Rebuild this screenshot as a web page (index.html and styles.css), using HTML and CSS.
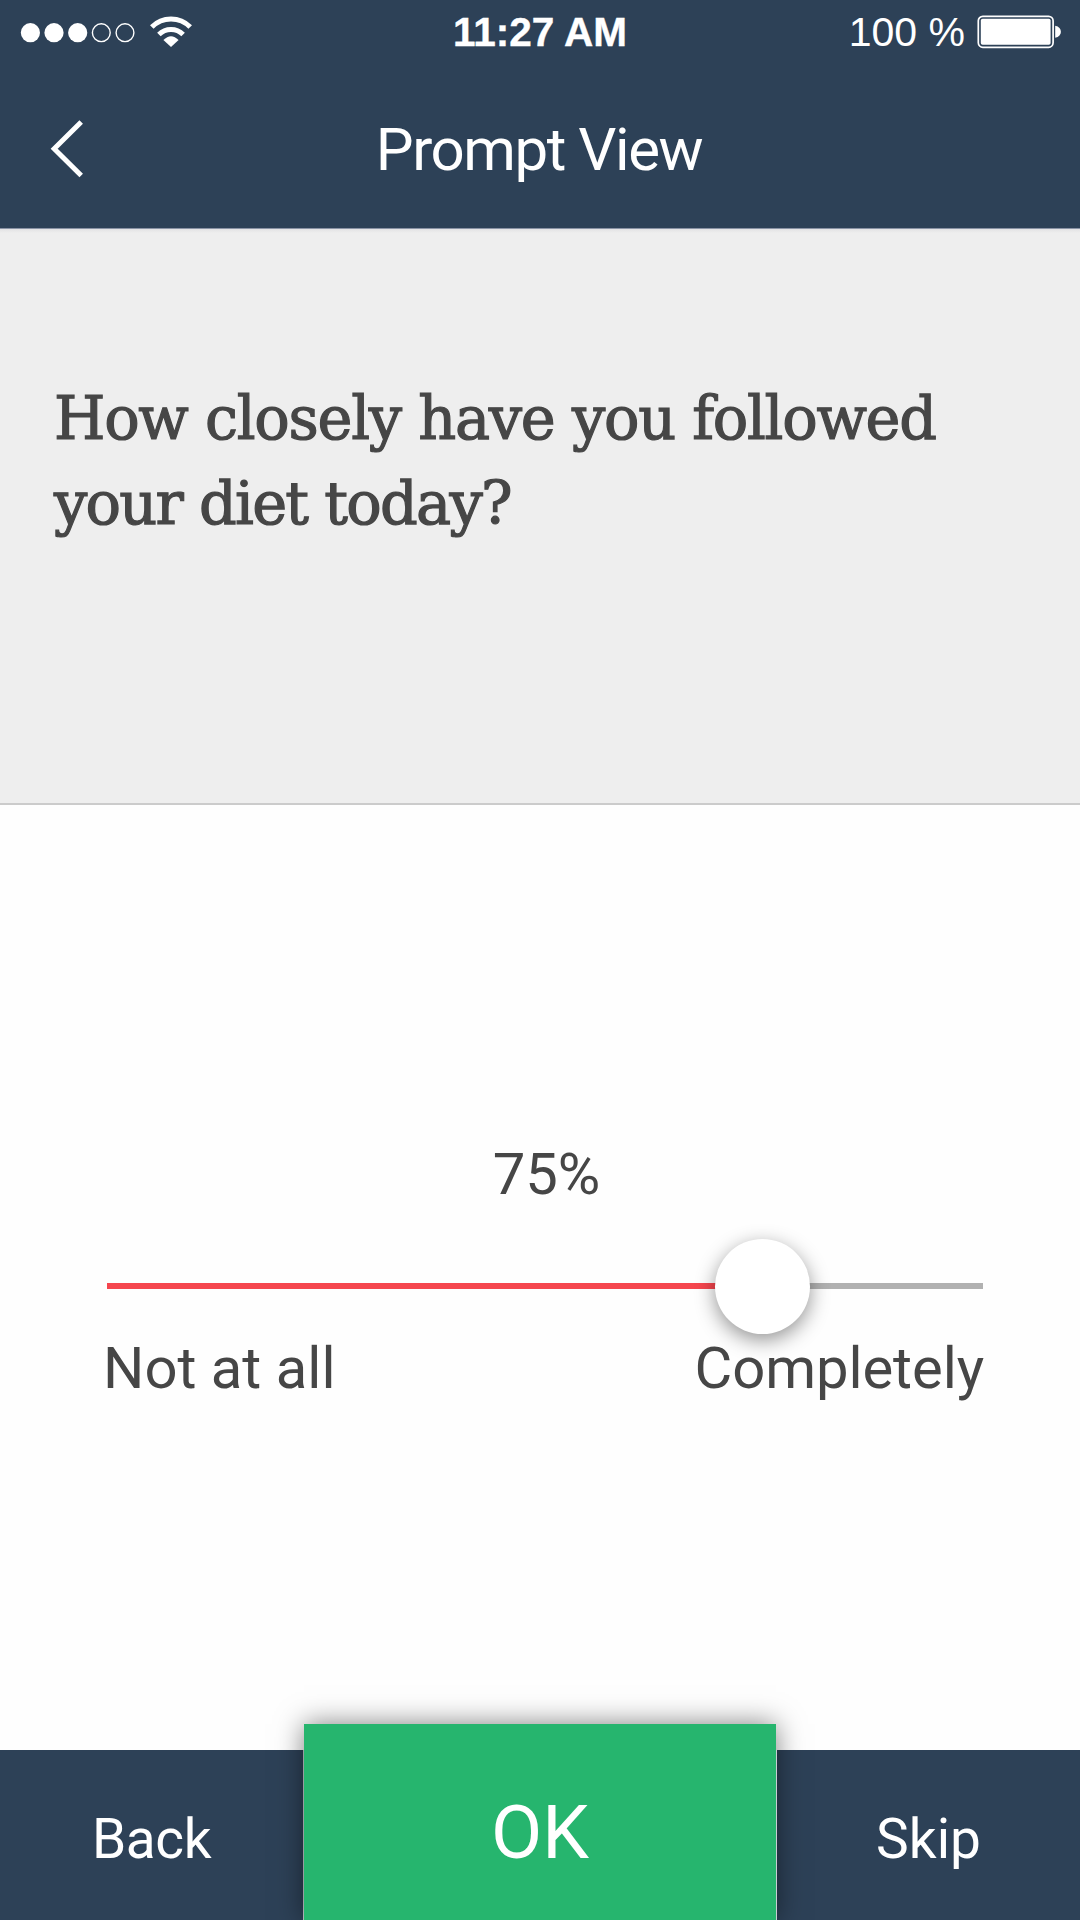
FILE: index.html
```
<!DOCTYPE html>
<html lang="en">
<head>
<meta charset="utf-8">
<title>Prompt View</title>
<link rel="stylesheet" href="styles.css">
</head>
<body>
<div class="screen">
  <header class="header">
    <div class="status">
      <svg class="signal" width="193" height="64" viewBox="0 0 193 64" aria-hidden="true">
        <g fill="#fff">
          <circle cx="30.4" cy="31.7" r="9.6"/>
          <circle cx="54" cy="31.7" r="9.6"/>
          <circle cx="77.7" cy="31.7" r="9.6"/>
          <path d="M171 46.1 163.4 39.1Q171 31.5 178.6 39.1Z"/>
        </g>
        <g fill="none" stroke="#fff">
          <circle cx="101.3" cy="31.7" r="8.9" stroke-width="1.4"/>
          <circle cx="125" cy="31.7" r="8.9" stroke-width="1.4"/>
          <path d="M151.8 25.9A27 27 0 0 1 190.2 25.9" stroke-width="5"/>
          <path d="M158.9 33.5A17.1 17.1 0 0 1 183.1 33.5" stroke-width="5"/>
        </g>
      </svg>
      <span class="time">11:27 AM</span>
      <div class="power">
        <span class="percent">100 %</span>
        <svg class="battery" width="86" height="34" viewBox="0 0 86 34" aria-hidden="true">
          <rect x="1.3" y="1.3" width="74.8" height="31" rx="4.5" fill="none" stroke="#fff" stroke-width="1.7"/>
          <rect x="3.8" y="3.8" width="69.8" height="26" rx="1.8" fill="#fff"/>
          <path d="M78.2 10.8C85.8 11.8 85.8 21.8 78.2 22.8Z" fill="#fff"/>
        </svg>
      </div>
    </div>
    <div class="nav">
      <svg class="chevron" width="34" height="60" viewBox="0 0 34 60" aria-label="Back">
        <path d="M31.2 3 4.2 29.8 31.2 56.6" fill="none" stroke="#fff" stroke-width="5"/>
      </svg>
      <h1 class="title">Prompt View</h1>
    </div>
  </header>
  <section class="question">
    <p class="prompt"><span class="line">How closely have you followed</span> <span class="line line-last">your diet today?</span></p>
  </section>
  <main class="answer">
    <div class="value">75%</div>
    <div class="slider">
      <div class="fill" style="width:75%"></div>
      <div class="thumb" style="left:75%"></div>
    </div>
    <div class="labels"><span>Not at all</span><span class="max">Completely</span></div>
  </main>
  <footer class="actions">
    <div class="action back">Back</div>
    <div class="action ok">OK</div>
    <div class="action skip">Skip</div>
  </footer>
</div>
</body>
</html>
```
FILE: styles.css
```
* { box-sizing: border-box; }
body { margin: 0; }
.screen {
  width: 1080px;
  height: 1920px;
  display: flex;
  flex-direction: column;
  overflow: hidden;
  background: #fefefe;
  color: #464646;
  font-family: Roboto, "Liberation Sans", sans-serif;
}
.header {
  height: 229px;
  background: #2d4157;
  border-bottom: 1px solid #8a93a5;
  color: #fff;
}
.status {
  height: 65px;
  display: grid;
  grid-template-columns: 1fr auto 1fr;
  align-items: center;
  font-family: "Liberation Sans", sans-serif;
  line-height: 65px;
}
.signal { display: block; }
.time { font-size: 40.5px; font-weight: bold; -webkit-text-stroke: .4px #fff; }
.power {
  display: flex;
  align-items: center;
  justify-content: flex-end;
  gap: 12px;
  padding-right: 17px;
}
.percent { font-size: 41px; }
.battery { display: block; margin-bottom: 1px; }
.nav {
  height: 163px;
  padding: 4px 51px 0 49px;
  display: grid;
  grid-template-columns: 1fr auto 1fr;
  align-items: center;
}
.chevron { display: block; margin-left: 1px; }
.title {
  margin: 0;
  padding-top: 3px;
  font-size: 60px;
  font-weight: 400;
  letter-spacing: -1.45px;
  line-height: 80px;
}
.question {
  height: 576px;
  padding: 148px 54px 0;
  background: #eee linear-gradient(#e2e2e4, #eee) top / 100% 4px no-repeat;
  border-bottom: 2px solid #cbcbcb;
}
.prompt {
  margin: 0;
  font-family: "DejaVu Serif", serif;
  font-size: 59px;
  line-height: 84.5px;
  -webkit-text-stroke: 1.2px #464646;
}
.line { display: block; white-space: nowrap; letter-spacing: -1.3px; }
.line-last { letter-spacing: -1.75px; }
.answer {
  flex: 1;
  padding: 329px 97px 0 107px;
  font-size: 58px;
  line-height: 80px;
}
.value { padding-left: 3px; text-align: center; }
.slider {
  position: relative;
  height: 6px;
  margin-top: 69px;
  background: #b1b1b1;
}
.fill { height: 6px; background: #f5464e; }
.thumb {
  position: absolute;
  top: 3px;
  width: 95px;
  height: 95px;
  margin: -47px 0 0 -49px;
  border-radius: 50%;
  background: #fff;
  box-shadow: 0 6px 20px rgba(0, 0, 0, .42);
}
.labels {
  position: relative;
  display: flex;
  justify-content: space-between;
  margin: 39px -1px 0 -4px;
}
.max { letter-spacing: -.1px; }
.actions {
  height: 170px;
  display: grid;
  grid-template-columns: 304px 472px 304px;
  background: #2d4157;
  color: #fff;
  font-size: 55px;
  text-align: center;
}
.action { height: 170px; padding-top: 8px; line-height: 162px; }
.back { border-right: 1px solid #c8ced4; letter-spacing: -.4px; }
.skip { border-left: 1px solid #c8ced4; }
.ok {
  height: 196px;
  margin-top: -26px;
  padding-top: 21px;
  line-height: 175px;
  font-size: 74.5px;
  background: #26b56e;
  box-shadow: 0 0 26px rgba(0, 0, 0, .5);
}
```
